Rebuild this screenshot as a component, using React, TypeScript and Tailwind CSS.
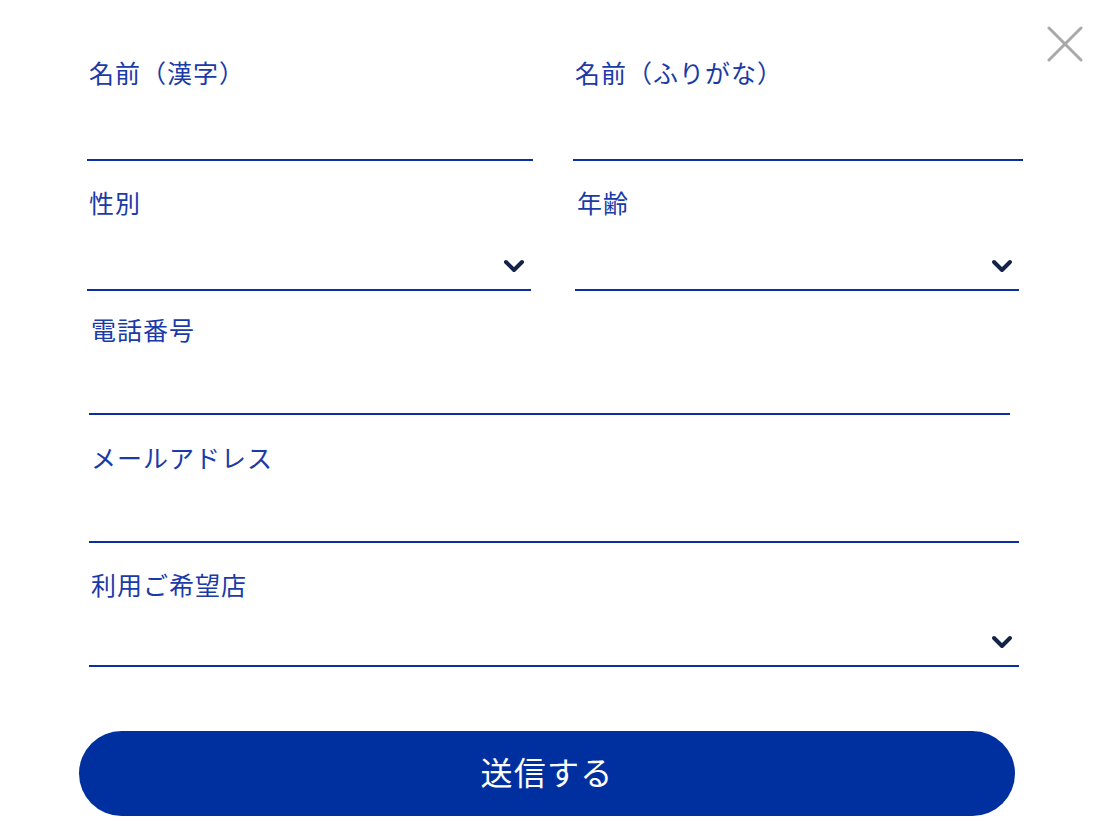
import React from "react";

const labelCls = "block text-[25px] leading-[32px] text-[#1a3aa8] tracking-[0.04em] -mt-[3px] mb-[3px]";

function Chevron() {
    return (
        <svg width="22" height="14" viewBox="0 0 22 14" className="absolute right-[6px] bottom-[16px]">
            <path d="M3 3 L11 11 L19 3" fill="none" stroke="#14234a" strokeWidth="4" strokeLinecap="round" strokeLinejoin="round" />
        </svg>
    );
}

function Field({ label, h, select, className = "" }: { label: string; h: string; select?: boolean; className?: string }) {
    return (
        <div className={className}>
            <label className={`${labelCls} pl-[2px]`}>{label}</label>
            <div className={`relative ${h} border-b-2 border-[#0b2ea3]`}>
                {select && <Chevron />}
            </div>
        </div>
    );
}

export default function App() {
    return (
        <div className="relative w-[1104px] h-[833px] bg-white overflow-hidden" style={{ fontFamily: '"Noto Sans CJK JP", "Noto Sans", sans-serif' }}>
            {/* 閉じるボタン */}
            <button className="absolute left-[1046px] top-[26px] w-[38px] h-[36px]">
                <svg width="38" height="36" viewBox="0 0 38 36">
                    <path d="M3 2 L35 34 M35 2 L3 34" stroke="#a9a9a9" strokeWidth="3" strokeLinecap="round" />
                </svg>
            </button>

            <div className="flex flex-col pt-[59px]">
                <div className="flex ml-[87px] w-[936px] gap-[40px]">
                    <Field label="名前（漢字）" h="h-[70px]" className="w-[446px]" />
                    <Field label="名前（ふりがな）" h="h-[70px]" className="w-[450px]" />
                </div>
                <div className="flex ml-[87px] w-[932px] gap-[44px] mt-[28px]">
                    <Field label="性別" h="h-[70px]" select className="w-[444px]" />
                    <Field label="年齢" h="h-[70px]" select className="w-[444px]" />
                </div>
                <Field label="電話番号" h="h-[67px]" className="ml-[89px] w-[921px] mt-[25px]" />
                <Field label="メールアドレス" h="h-[67px]" className="ml-[89px] w-[930px] mt-[29px]" />
                <Field label="利用ご希望店" h="h-[64px]" select className="ml-[89px] w-[930px] mt-[28px]" />

                <button className="ml-[79px] w-[936px] h-[85px] mt-[64px] pb-[6px] rounded-full bg-[#0030a0] text-white text-[32px] leading-none tracking-[0.04em]">
                    送信する
                </button>
            </div>
        </div>
    );
}
